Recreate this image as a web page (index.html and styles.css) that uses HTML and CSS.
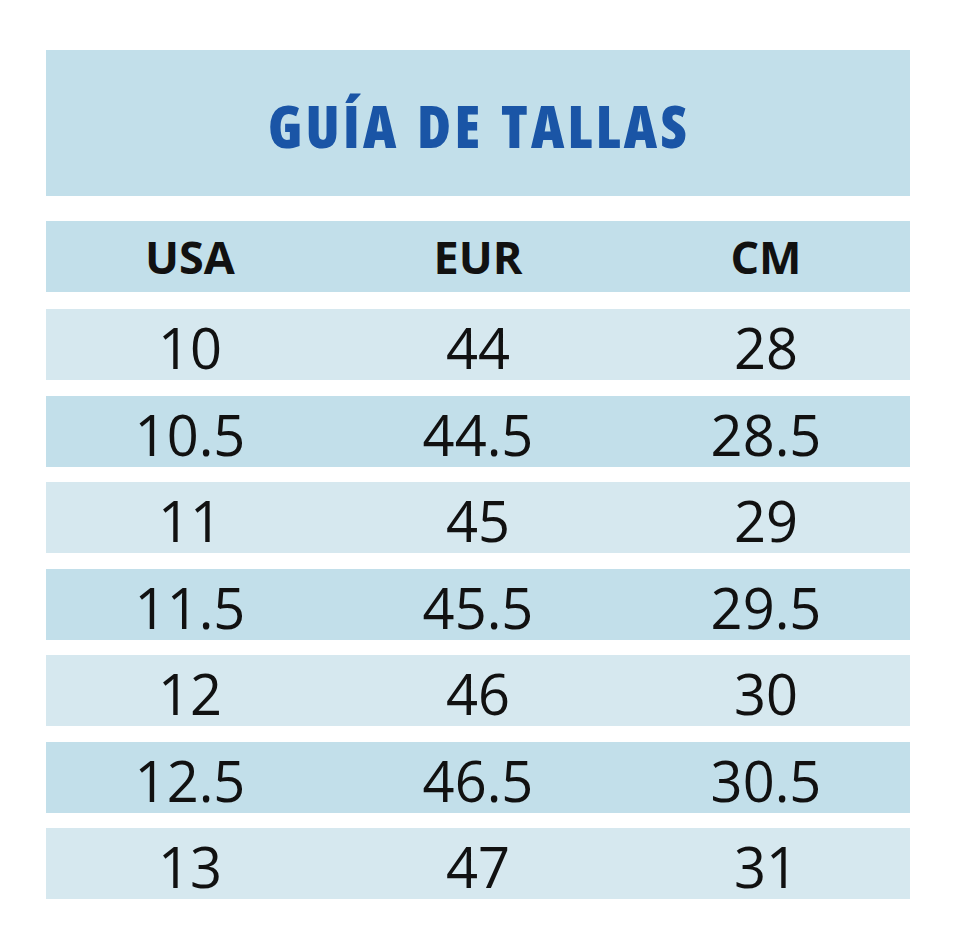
FILE: index.html
```html
<!DOCTYPE html>
<html lang="es">
<head>
<meta charset="utf-8">
<title>Guía de tallas</title>
<link rel="stylesheet" href="styles.css">
</head>
<body>
<main class="chart">
  <header class="title-box"><h1 class="title">GUÍA DE TALLAS</h1></header>
  <div class="row head"><span>USA</span><span>EUR</span><span>CM</span></div>
  <div class="rows">
    <div class="row light"><span>10</span><span>44</span><span>28</span></div>
    <div class="row dark"><span>10.5</span><span>44.5</span><span>28.5</span></div>
    <div class="row light"><span>11</span><span>45</span><span>29</span></div>
    <div class="row dark"><span>11.5</span><span>45.5</span><span>29.5</span></div>
    <div class="row light"><span>12</span><span>46</span><span>30</span></div>
    <div class="row dark"><span>12.5</span><span>46.5</span><span>30.5</span></div>
    <div class="row light"><span>13</span><span>47</span><span>31</span></div>
  </div>
</main>
</body>
</html>
```
FILE: styles.css
```css
html, body {
  margin: 0;
  padding: 0;
  background: #ffffff;
}
.chart {
  width: 864px;
  padding: 50px 0 0 46px;
  display: flex;
  flex-direction: column;
}
.title-box {
  height: 146px;
  background: #c2dfea;
  display: flex;
  align-items: center;
  justify-content: center;
}
.title {
  margin: 6px 0 0 2px;
  font-family: "Open Sans", sans-serif;
  font-weight: 800;
  font-stretch: 87.5%;
  font-size: 58px;
  letter-spacing: 3.3px;
  word-spacing: 4px;
  color: #1a55a6;
  line-height: 1;
}
.row {
  height: 71px;
  display: grid;
  grid-template-columns: repeat(3, 1fr);
  align-items: center;
  justify-items: center;
  font-family: "Open Sans", sans-serif;
  color: #111111;
}
.head {
  margin-top: 25px;
  background: #c2dfea;
  font-weight: 700;
  font-size: 45px;
}
.rows {
  margin-top: 17px;
  display: flex;
  flex-direction: column;
  gap: 15.5px;
}
.rows .row {
  font-size: 56px;
  font-weight: 400;
}
.light { background: #d6e8ef; }
.dark { background: #c2dfea; }
```
